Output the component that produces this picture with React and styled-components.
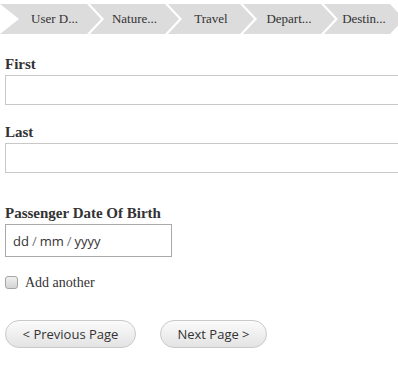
import React from "react";
import styled, { createGlobalStyle } from "styled-components";

const Global = createGlobalStyle`
  html, body { margin: 0; padding: 0; background: #fff; }
  body { font-family: "Liberation Serif", "Times New Roman", serif; color: #333; overflow: hidden; }
  * { box-sizing: border-box; }
`;

const Page = styled.div`
  width: 398px;
  height: 366px;
  overflow: hidden;
`;

const Crumbs = styled.nav`
  display: flex;
  height: 30px;
  margin-top: 4px;
  width: 410px;
`;

const Crumb = styled.div`
  flex: none;
  width: ${(p) => p.$w}px;
  display: flex;
  align-items: center;
  justify-content: center;
  padding-left: ${(p) => (p.$first ? 22 : 14)}px;
  padding-right: 14px;
  margin-left: ${(p) => (p.$first ? 0 : -11)}px;
  background: #dcdcdc;
  font-size: 13px;
  color: #333;
  white-space: nowrap;
  clip-path: polygon(
    0 0,
    calc(100% - 14px) 0,
    100% 50%,
    calc(100% - 14px) 100%,
    0 100%,
    ${(p) => (p.$first ? 19 : 14)}px 50%
  );
`;

const Form = styled.form`
  padding: 20px 0 0 5px;
  display: flex;
  flex-direction: column;
`;

const Field = styled.div`
  display: flex;
  flex-direction: column;
  margin-bottom: ${(p) => p.$mb || 0}px;
`;

const Label = styled.label`
  font-weight: bold;
  font-size: 15px;
  line-height: 20px;
  color: #333;
  margin-bottom: 1px;
`;

const TextInput = styled.input`
  width: 420px;
  height: 30px;
  border: 1px solid #c8c8c8;
  background: #fff;
  outline: none;
`;

const DateBox = styled.div`
  width: 167px;
  height: 33px;
  border: 1px solid #a9a9a9;
  display: flex;
  align-items: center;
  padding-left: 7px;
  font-family: "Open Sans", "Noto Sans", sans-serif;
  font-size: 13px;
  color: #333;
`;

const Slash = styled.span`
  color: #777;
  margin: 0 3px;
`;

const CheckRow = styled.label`
  display: flex;
  align-items: center;
  gap: 7px;
  margin-top: 18px;
  font-size: 14px;
  color: #333;
`;

const Box = styled.span`
  width: 13px;
  height: 13px;
  margin-top: -1px;
  border: 1px solid #a5a5a5;
  border-radius: 3px;
  background: linear-gradient(#f0f0f0, #d4d4d4);
`;

const Buttons = styled.div`
  display: flex;
  gap: 24px;
  margin-top: 29px;
`;

const Button = styled.button`
  height: 28px;
  padding: 0;
  border: 1px solid #c9c9c9;
  border-radius: 14px;
  background: linear-gradient(#fbfbfb, #e3e3e3);
  font-family: "Open Sans", "Noto Sans", sans-serif;
  font-size: 13px;
  color: #333;
  width: ${(p) => p.$w}px;
`;

const crumbs = [
  { label: "User D...", w: 101 },
  { label: "Nature...", w: 89 },
  { label: "Travel", w: 86 },
  { label: "Depart...", w: 92 },
  { label: "Destin...", w: 80 },
];

export default function App() {
  return (
    <Page>
      <Global />
      <Crumbs>
        {crumbs.map((c, i) => (
          <Crumb key={c.label} $first={i === 0} $w={c.w}>
            {c.label}
          </Crumb>
        ))}
      </Crumbs>
      <Form>
        <Field $mb={17}>
          <Label>First</Label>
          <TextInput type="text" />
        </Field>
        <Field $mb={30}>
          <Label>Last</Label>
          <TextInput type="text" />
        </Field>
        <Field>
          <Label>Passenger Date Of Birth</Label>
          <DateBox>
            dd<Slash>/</Slash>mm<Slash>/</Slash>yyyy
          </DateBox>
        </Field>
        <CheckRow>
          <Box />
          Add another
        </CheckRow>
        <Buttons>
          <Button type="button" $w={131}>&lt; Previous Page</Button>
          <Button type="button" $w={107}>Next Page &gt;</Button>
        </Buttons>
      </Form>
    </Page>
  );
}
